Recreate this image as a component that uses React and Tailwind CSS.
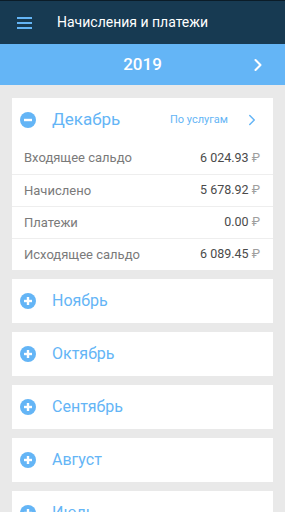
import { ChevronRight } from "lucide-react";

const rows = [
  ["Входящее сальдо", "6 024.93"],
  ["Начислено", "5 678.92"],
  ["Платежи", "0.00"],
  ["Исходящее сальдо", "6 089.45"],
];

const months = ["Ноябрь", "Октябрь", "Сентябрь", "Август", "Июль"];

function CircleIcon({ minus }) {
  return (
    <svg width="16" height="16" viewBox="0 0 16 16">
      <circle cx="8" cy="8" r="8" fill="#64b5f6" />
      <rect x="4" y="6.8" width="8" height="2.4" fill="#fff" />
      {!minus && <rect x="6.8" y="4" width="2.4" height="8" fill="#fff" />}
    </svg>
  );
}

export default function App() {
  return (
    <div className="w-[285px] h-[512px] overflow-hidden bg-[#e9e9e9]" style={{ fontFamily: "Roboto, sans-serif" }}>

      {/* HEADER */}
      <div className="h-[44px] bg-[#173a52] flex items-center border-t border-[#0b1c28]">
        <svg width="16" height="12" viewBox="0 0 16 12" className="ml-[17px]">
          <rect x="0" y="0" width="15" height="2" fill="#64b5f6" />
          <rect x="0" y="5" width="15" height="2" fill="#64b5f6" />
          <rect x="0" y="10" width="15" height="2" fill="#64b5f6" />
        </svg>
        <div className="ml-[24px] text-white text-[14px]">Начисления и платежи</div>
      </div>

      {/* YEAR */}
      <div className="h-[41px] bg-[#64b5f6] flex items-center justify-center relative">
        <div className="text-white text-[17px] font-medium">2019</div>
        <ChevronRight size={20} strokeWidth={2.5} className="absolute right-[17px] text-white" />
      </div>

      <div className="px-[12px] pt-[13px] flex flex-col gap-[9px]">
        {/* DECEMBER */}
        <div className="bg-white">
          <div className="h-[44px] flex items-center pl-[8px] pr-[12px]">
            <CircleIcon minus />
            <div className="ml-[16px] text-[17px] text-[#64b5f6]">Декабрь</div>
            <div className="ml-auto text-[11px] text-[#64b5f6]">По услугам</div>
            <ChevronRight size={18} strokeWidth={2} className="ml-[15px] text-[#64b5f6]" />
          </div>
          {rows.map(([label, value], i) => (
            <div key={label} className={`h-[32px] flex items-center justify-between px-[12px] text-[13px] ${i > 0 ? "border-t border-[#eeeeee]" : ""}`}>
              <span className="text-[#7a7a7a]">{label}</span>
              <span className="text-[12.5px] text-[#4a4a4a] pr-[1px]">
                {value} <span className="text-[#9e9e9e]">₽</span>
              </span>
            </div>
          ))}
        </div>

        {/* OTHER MONTHS */}
        {months.map((m) => (
          <div key={m} className="bg-white h-[44px] flex items-center pl-[8px]">
            <CircleIcon />
            <div className="ml-[16px] text-[16px] text-[#64b5f6]">{m}</div>
          </div>
        ))}
      </div>
    </div>
  );
}
